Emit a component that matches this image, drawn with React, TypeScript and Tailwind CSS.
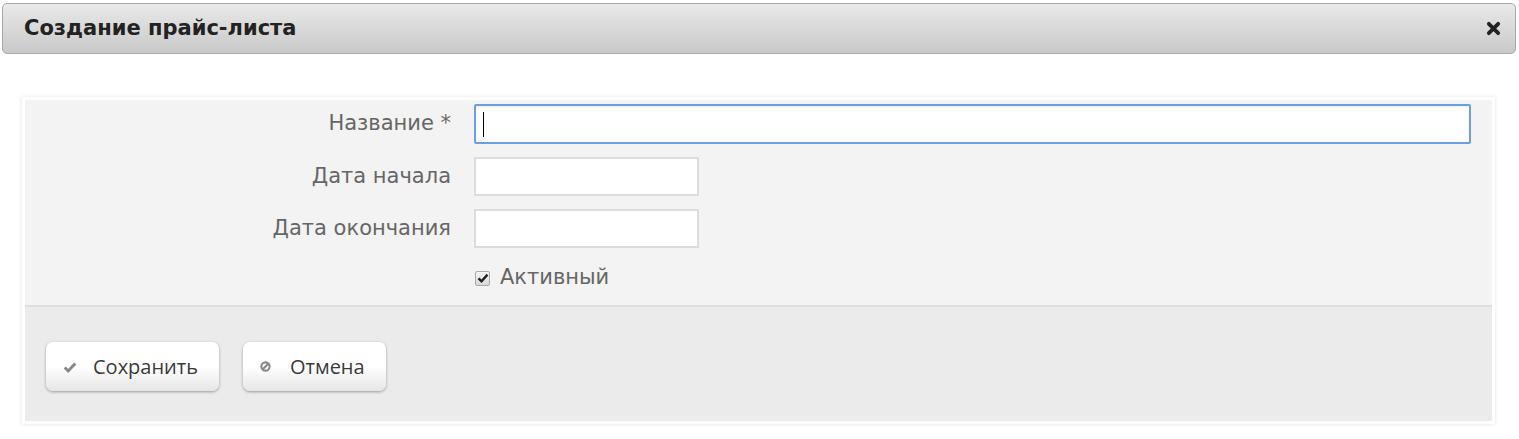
import React from "react";

function CloseIcon() {
  return (
    <svg viewBox="0 0 16 16" className="w-[15px] h-[15px]">
      <path d="M3 3 L13 13 M13 3 L3 13" stroke="#222" strokeWidth="4" strokeLinecap="round" />
    </svg>
  );
}

function OkIcon() {
  return (
    <svg viewBox="0 0 16 16" className="w-[14px] h-[14px]">
      <path d="M2 8.5 L6 12.5 L14 4" fill="none" stroke="#888" strokeWidth="3.4" />
    </svg>
  );
}

function BanIcon() {
  return (
    <svg viewBox="0 0 16 16" className="w-[11px] h-[11px]">
      <circle cx="8" cy="8" r="6" fill="none" stroke="#888" strokeWidth="3" />
      <path d="M4 12 L12 4" stroke="#888" strokeWidth="3" />
    </svg>
  );
}

function Field({ label, children }: { label: string; children: React.ReactNode }) {
  return (
    <div className="flex items-center">
      <label className="w-[426px] shrink-0 text-right text-[21px] text-[#666]">{label}</label>
      <div className="ml-[23px] flex-1 pr-[21px]">{children}</div>
    </div>
  );
}

function Button({ icon, text, width, gap }: { icon: React.ReactNode; text: string; width: string; gap: string }) {
  return (
    <button
      className={`${width} ${gap} h-[49px] flex items-center pl-[17px] rounded-[7px] bg-gradient-to-b from-white via-white to-[#e6e6e6] shadow-[0_1px_3px_rgba(0,0,0,0.35)] text-[20px] text-[#3a3a3a] [font-family:'Open_Sans',sans-serif]`}
    >
      {icon}
      <span>{text}</span>
    </button>
  );
}

export default function App() {
  return (
    <div className="w-[1519px] h-[439px] bg-white [font-family:'DejaVu_Sans',sans-serif] pt-[3px]">
      <div className="ml-[2px] mr-[3px] h-[51px] rounded-[5px] border border-[#a9a9a9] bg-gradient-to-b from-[#e9e9e9] to-[#c9c9c9] flex items-center justify-between pl-[21px] pr-[14px]">
        <h1 className="text-[21px] font-bold text-[#222]">Создание прайс-листа</h1>
        <CloseIcon />
      </div>

      <div className="mt-[43px] ml-[22px] w-[1473px] border-[3px] border-white shadow-[0_0_4px_rgba(0,0,0,0.12)]">
        <div className="bg-[#f3f3f3] pt-[4px] pb-[10px] flex flex-col gap-[13px] border-b-2 border-[#dedede]">
          <Field label="Название *">
            <div className="h-[40px] bg-white border-2 border-[#6c9fe6] rounded-[2px] flex items-center pl-[7px] shadow-[inset_0_1px_2px_rgba(0,0,0,0.08)]">
              <span className="w-px h-[25px] bg-black" />
            </div>
          </Field>
          <Field label="Дата начала">
            <div className="w-[225px] h-[39px] bg-white border-2 border-[#dcdcdc]" />
          </Field>
          <Field label="Дата окончания">
            <div className="w-[225px] h-[39px] bg-white border-2 border-[#dcdcdc]" />
          </Field>
          <div className="flex items-center pl-[450px] h-[34px]">
            <span className="w-[15px] h-[15px] rounded-[2px] border border-[#aaa] bg-gradient-to-b from-[#f4f4f4] to-[#d8d8d8] flex items-center justify-center">
              <svg viewBox="0 0 16 16" className="w-[12px] h-[12px]">
                <path d="M2 8.5 L6 12.5 L14 3.5" fill="none" stroke="#222" strokeWidth="3.2" />
              </svg>
            </span>
            <span className="ml-[10px] text-[21px] text-[#666]">Активный</span>
          </div>
        </div>
        <div className="bg-[#ebebeb] h-[114px] flex items-start gap-[24px] pl-[21px] pt-[35px]">
          <Button icon={<OkIcon />} text="Сохранить" width="w-[173px]" gap="gap-[16px]" />
          <Button icon={<BanIcon />} text="Отмена" width="w-[143px]" gap="gap-[19px]" />
        </div>
      </div>
    </div>
  );
}
